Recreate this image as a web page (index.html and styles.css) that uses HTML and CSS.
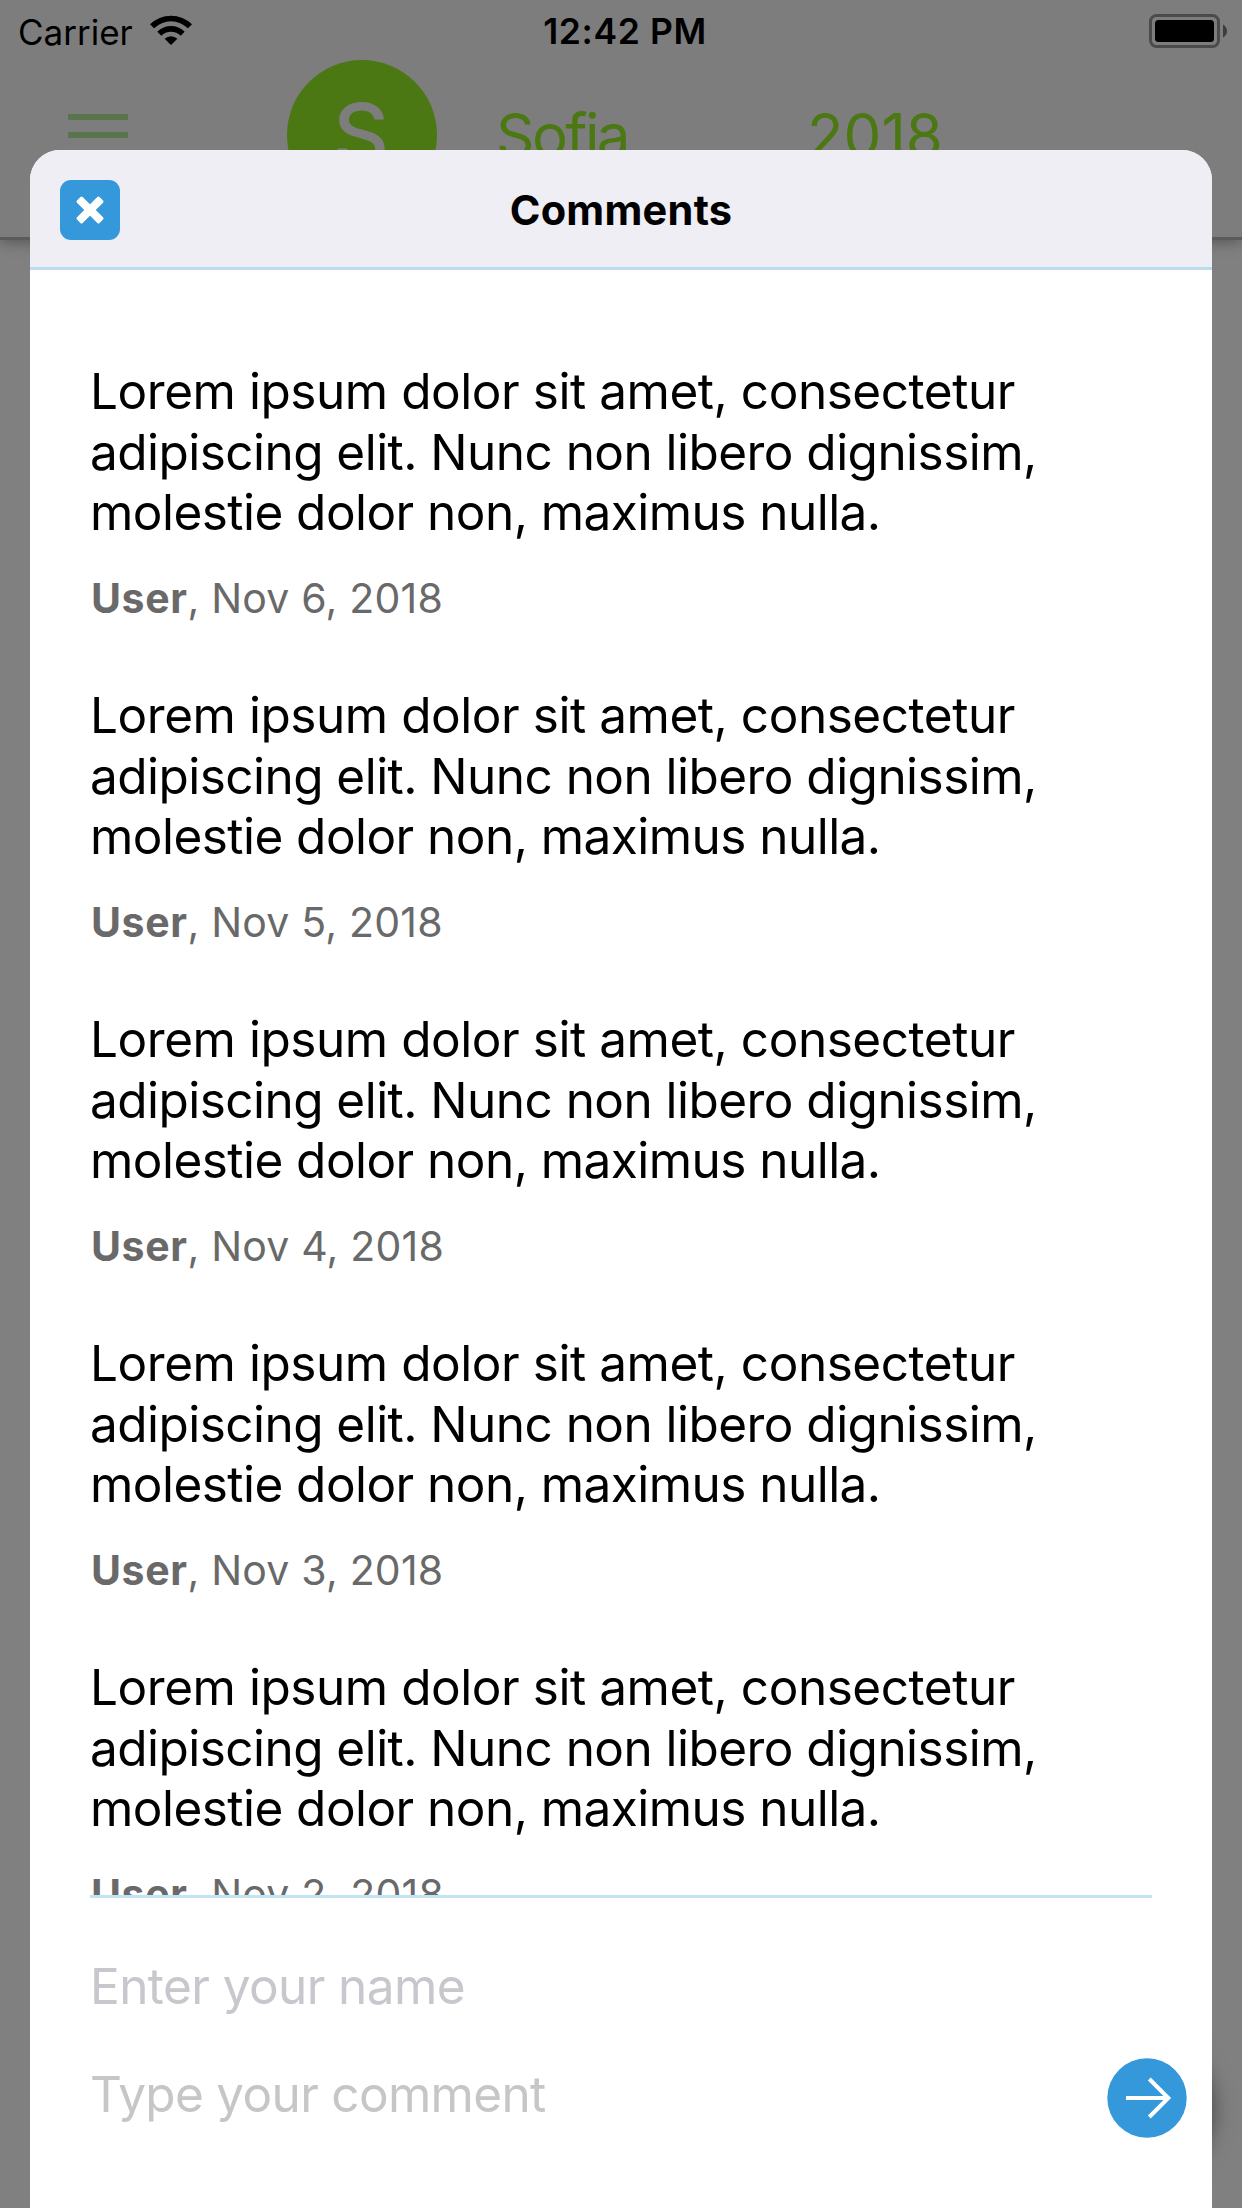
FILE: index.html
```html
<!DOCTYPE html>
<html lang="en">
<head>
<meta charset="utf-8">
<title>Comments</title>
<link rel="stylesheet" href="styles.css">
</head>
<body>
<div class="screen">
  <header class="topbar">
    <div class="status">
      <div class="status-left">
        <span>Carrier</span>
        <svg class="wifi" width="42" height="30" viewBox="0 0 42 30">
          <path d="M0 9.3A30 30 0 0 1 42 9.3L38 13.3A24.3 24.3 0 0 0 4 13.3Z"/>
          <path d="M7.3 16.7A19.5 19.5 0 0 1 34.7 16.7L30.7 20.7A13.8 13.8 0 0 0 11.3 20.7Z"/>
          <path d="M14.6 23.8A9.3 9.3 0 0 1 27.4 23.8L21 30Z"/>
        </svg>
      </div>
      <div class="status-time">12:42 PM</div>
      <div class="status-right">
        <svg width="79" height="34" viewBox="0 0 79 34">
          <rect x="1.5" y="1.5" width="68" height="31" rx="6" fill="none" stroke="#4b4b4b" stroke-width="3"/>
          <rect x="6" y="6" width="59" height="22" rx="3.5"/>
          <path d="M74 10.5Q78 13 78 17Q78 21 74 23.5Z" fill="#3d3d3d"/>
        </svg>
      </div>
    </div>
    <div class="nav">
      <div class="burger"><i></i><i></i><i></i></div>
      <div class="avatar">S</div>
      <span class="name">Sofia</span>
      <span class="year">2018</span>
    </div>
  </header>
  <div class="fab"></div>

  <section class="modal">
    <header class="modal-head">
      <button class="close" aria-label="Close">
        <svg width="30" height="30" viewBox="-15 -15 30 30" fill="#fff"><rect x="-16" y="-4" width="32" height="8" rx="1.6" transform="rotate(45)"/><rect x="-16" y="-4" width="32" height="8" rx="1.6" transform="rotate(-45)"/></svg>
      </button>
      <h1>Comments</h1>
    </header>
    <div class="list">
      <article class="comment">
        <p>Lorem ipsum dolor sit amet, consectetur<br>adipiscing elit. Nunc non libero dignissim,<br>molestie dolor non, maximus nulla.</p>
        <footer><b>User</b>, Nov 6, 2018</footer>
      </article>
      <article class="comment">
        <p>Lorem ipsum dolor sit amet, consectetur<br>adipiscing elit. Nunc non libero dignissim,<br>molestie dolor non, maximus nulla.</p>
        <footer><b>User</b>, Nov 5, 2018</footer>
      </article>
      <article class="comment">
        <p>Lorem ipsum dolor sit amet, consectetur<br>adipiscing elit. Nunc non libero dignissim,<br>molestie dolor non, maximus nulla.</p>
        <footer><b>User</b>, Nov 4, 2018</footer>
      </article>
      <article class="comment">
        <p>Lorem ipsum dolor sit amet, consectetur<br>adipiscing elit. Nunc non libero dignissim,<br>molestie dolor non, maximus nulla.</p>
        <footer><b>User</b>, Nov 3, 2018</footer>
      </article>
      <article class="comment">
        <p>Lorem ipsum dolor sit amet, consectetur<br>adipiscing elit. Nunc non libero dignissim,<br>molestie dolor non, maximus nulla.</p>
        <footer><b>User</b>, Nov 2, 2018</footer>
      </article>
    </div>
    <div class="compose">
      <div class="field field-name">Enter your name</div>
      <div class="compose-row">
        <div class="field field-comment">Type your comment</div>
        <button class="send" aria-label="Send">
          <svg width="80" height="80" viewBox="0 0 80 80" fill="none" stroke="#fff" stroke-width="4"><circle cx="40" cy="40" r="39.7" fill="#3598db" stroke="none"/><path d="M19 40H61M42.3 21L61.3 40L42.3 59"/></svg>
        </button>
      </div>
    </div>
  </section>
</div>
</body>
</html>
```

FILE: styles.css
```css
* { box-sizing: border-box; margin: 0; padding: 0; }
body { background: #808080; font-family: Inter, "Liberation Sans", sans-serif; color: #000; }
button { border: 0; background: none; }

.screen { position: relative; width: 1242px; height: 2208px; overflow: hidden; background: #808080; }

.topbar {
  height: 240px;
  background: #7d7d7d;
  border-bottom: 3px solid #5b5b5b;
  box-shadow: 0 2px 14px rgba(0, 0, 0, .35);
}
.status { display: grid; grid-template-columns: 1fr auto 1fr; height: 60px; align-items: center; padding: 0 14px 0 18px; }
.status-left { display: flex; align-items: center; gap: 17px; font-size: 35px; line-height: 60px; padding-top: 1px; }
.wifi { margin-top: -3px; }
.status-time { font-size: 35.5px; font-weight: 600; letter-spacing: .6px; line-height: 60px; padding: 2px 0 0 4px; }
.status-right { display: flex; justify-content: flex-end; }
.status-right svg { display: block; }

.nav { display: flex; height: 150px; align-items: center; padding-left: 68px; color: #4b7813; }
.burger { display: flex; flex-direction: column; gap: 12px; width: 60px; }
.burger i { height: 6px; background: #5a754e; }
.avatar {
  width: 150px; height: 150px; margin-left: 159px; padding-right: 2px;
  border-radius: 50%; background: #4b7813; color: #7d7d7d;
  font-size: 87px; font-weight: 550; line-height: 150px; text-align: center;
}
.name, .year { font-size: 60px; line-height: 150px; }
.name { width: 311px; margin-left: 59px; letter-spacing: -2.6px; }

.fab {
  position: absolute; left: 1074px; top: 2038px; width: 136px; height: 136px;
  border-radius: 50%; background: #4b7813; box-shadow: 0 3px 24px rgba(0, 0, 0, .6);
}

.modal {
  position: absolute; left: 30px; right: 30px; top: 150px; bottom: 0;
  display: flex; flex-direction: column;
  border-radius: 30px 30px 0 0; background: #fff; overflow: hidden;
}
.modal-head {
  display: grid; grid-template-columns: 60px 1fr 60px; align-items: center;
  height: 120px; flex: none; padding: 0 30px;
  background: #efeef4; border-bottom: 3px solid #badcee;
}
.modal-head h1 { font-size: 41.5px; font-weight: 700; letter-spacing: .25px; line-height: 60px; text-align: center; padding-top: 2px; }
.close { display: flex; width: 60px; height: 60px; margin-top: 3px; align-items: center; justify-content: center; border-radius: 11px; background: #3598db; }

.list { height: 1628px; flex: none; margin: 0 60px; padding-top: 91px; overflow: hidden; border-bottom: 3px solid #c4e3f4; }
.comment { height: 324px; }
.comment p { font-size: 49.5px; line-height: 60.5px; letter-spacing: -.54px; white-space: nowrap; }
.comment p::first-line { letter-spacing: -.45px; }
.comment footer { margin-top: 30.5px; padding-left: 1px; font-size: 41px; line-height: 50px; letter-spacing: .2px; color: #696969; }
.comment footer b { font-weight: 700; letter-spacing: .6px; }

.compose { padding: 58px 25px 0 60px; }
.field { font-size: 49.5px; line-height: 60px; letter-spacing: -.58px; }
.field-name { color: #c7c7cd; }
.field-comment { color: #c6c6c6; letter-spacing: -.68px; }
.compose-row { display: flex; align-items: flex-start; justify-content: space-between; margin-top: 42px; }
.compose-row .field { padding-top: 6px; }
.send { display: block; width: 80px; height: 80px; }
.send svg { display: block; }
```
